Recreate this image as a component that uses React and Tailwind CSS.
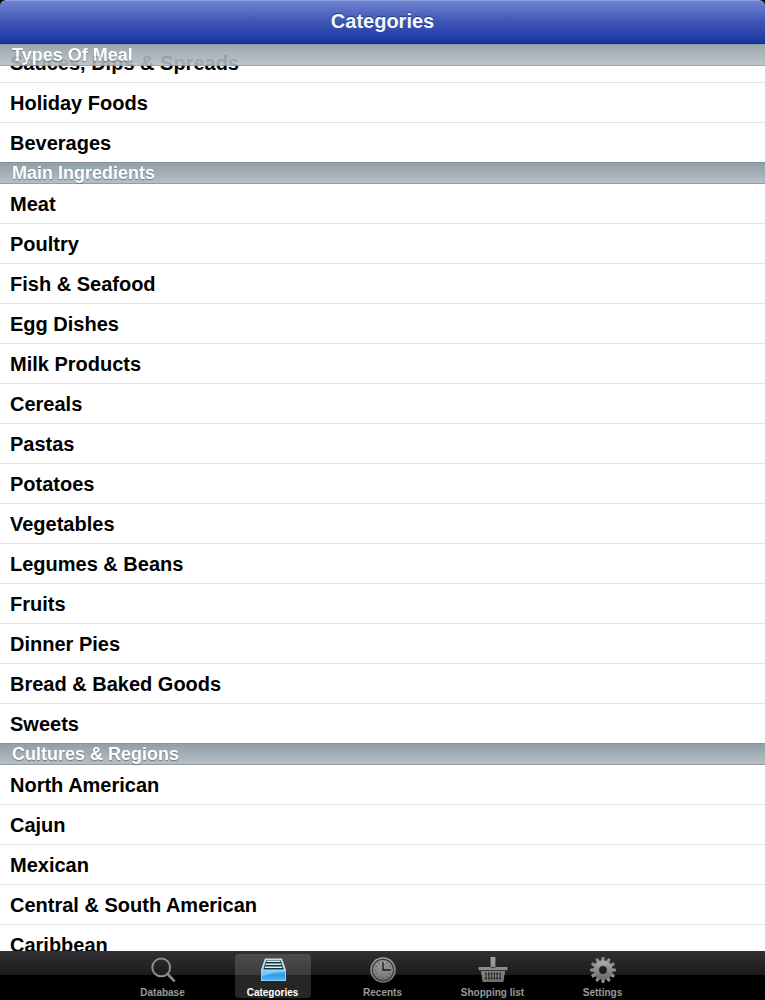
import { useState } from "react";

const sections = [
  {
    title: "Types Of Meal",
    items: ["Sauces, Dips & Spreads", "Holiday Foods", "Beverages"],
  },
  {
    title: "Main Ingredients",
    items: [
      "Meat",
      "Poultry",
      "Fish & Seafood",
      "Egg Dishes",
      "Milk Products",
      "Cereals",
      "Pastas",
      "Potatoes",
      "Vegetables",
      "Legumes & Beans",
      "Fruits",
      "Dinner Pies",
      "Bread & Baked Goods",
      "Sweets",
    ],
  },
  {
    title: "Cultures & Regions",
    items: [
      "North American",
      "Cajun",
      "Mexican",
      "Central & South American",
      "Caribbean",
    ],
  },
];

function IconGradient({ id }) {
  return (
    <defs>
      <linearGradient id={id} x1="0" y1="0" x2="0" y2="1">
        <stop offset="0" stopColor="#a3a3a3" />
        <stop offset="1" stopColor="#707070" />
      </linearGradient>
    </defs>
  );
}

function SearchIcon() {
  return (
    <svg width="28" height="28" viewBox="0 0 28 28" fill="none">
      <circle cx="12.2" cy="11.4" r="8.9" stroke="#8d8d8d" strokeWidth="2" />
      <path d="M18.8 18.2 L25 24.6" stroke="#858585" strokeWidth="2.8" strokeLinecap="round" />
    </svg>
  );
}

function DrawerIcon() {
  return (
    <svg width="28" height="28" viewBox="0 0 28 28">
      <defs>
        <linearGradient id="drawer" x1="0" y1="0" x2="0" y2="1">
          <stop offset="0" stopColor="#4fb6f3" />
          <stop offset="0.5" stopColor="#2d9fe8" />
          <stop offset="1" stopColor="#4dbaf8" />
        </linearGradient>
      </defs>
      <path d="M5.8 2.5 H23 L27 14 V25 H2 V14 Z" fill="#b9e3f7" />
      <path d="M7.2 4 H21.6 L24.8 13.6 H4.2 Z" fill="#17323f" />
      <path
        d="M7.5 5.2 H21.3 M6.6 8.2 H22.2 M5.8 11.2 H23.2"
        stroke="#d7f0fa"
        strokeWidth="1.5"
      />
      <path d="M2.6 14.6 H26.4 V24.4 H2.6 Z" fill="url(#drawer)" />
      <path d="M2.6 14.6 H26.4 V16 C16 16 9 18 2.6 20.6 Z" fill="#a5dcf8" opacity="0.6" />
    </svg>
  );
}

function ClockIcon() {
  const ticks = [0, 30, 60, 90, 120, 150, 180, 210, 240, 270, 300, 330];
  return (
    <svg width="28" height="28" viewBox="0 0 28 28">
      <IconGradient id="clock" />
      <circle cx="14" cy="14" r="12.8" fill="url(#clock)" />
      <circle cx="14" cy="14" r="10.6" fill="none" stroke="#3a3a3a" strokeWidth="1.1" />
      {ticks.map((a) => (
        <path
          key={a}
          d="M14 5.4 V7.2"
          stroke="#505050"
          strokeWidth="1"
          transform={`rotate(${a} 14 14)`}
        />
      ))}
      <path d="M14 6.5 V14 H21.5" fill="none" stroke="#1c1c1c" strokeWidth="1.4" />
    </svg>
  );
}

function BasketIcon() {
  const cols = [8, 10.8, 13.6, 16.4, 19.2, 22];
  return (
    <svg width="30" height="28" viewBox="0 0 30 28">
      <IconGradient id="basket" />
      <path
        d="M12.6 1 H17.4 V11 H29.4 V14.2 H27.2 L25.4 26 H4.6 L2.8 14.2 H0.6 V11 H12.6 Z"
        fill="url(#basket)"
      />
      <path d="M2.8 14.6 H27.2" stroke="#242424" strokeWidth="0.9" />
      <path d="M12.6 11.6 H17.4" stroke="#3a3a3a" strokeWidth="1" />
      {cols.map((x) => (
        <path
          key={x}
          d={`M${x} 16.6 V19.4 M${x} 20.6 V23.4`}
          stroke="#1f1f1f"
          strokeWidth="1.5"
        />
      ))}
    </svg>
  );
}

function GearIcon() {
  const teeth = [0, 30, 60, 90, 120, 150, 180, 210, 240, 270, 300, 330];
  return (
    <svg width="28" height="28" viewBox="0 0 28 28">
      <IconGradient id="gear" />
      {teeth.map((a) => (
        <path
          key={a}
          d="M11.9 6 L12.7 1 H15.3 L16.1 6 Z"
          fill="#8e8e8e"
          transform={`rotate(${a} 14 14)`}
        />
      ))}
      <circle cx="14" cy="14" r="6.8" fill="none" stroke="url(#gear)" strokeWidth="5.8" />
    </svg>
  );
}

const tabs = [
  { label: "Database", Icon: SearchIcon },
  { label: "Categories", Icon: DrawerIcon },
  { label: "Recents", Icon: ClockIcon },
  { label: "Shopping list", Icon: BasketIcon },
  { label: "Settings", Icon: GearIcon },
];

function Section({ title, items, scrolled }) {
  return (
    <section>
      <h2
        className={`sticky top-0 z-10 h-[22px] border-y border-t-[#84929b] border-b-[#959da3] bg-linear-to-b from-[#909fa8] to-[#b7bec4] px-3 text-lg leading-5 font-bold text-white [text-shadow:0_1px_1px_#6b7780] ${
          scrolled ? "opacity-90" : ""
        }`}
      >
        {title}
      </h2>
      {/* first section is partly scrolled under its sticky header */}
      <ul className={scrolled ? "-mt-[23px]" : ""}>
        {items.map((item) => (
          <li key={item} className="border-b border-[#e2e2e2] last:border-b-0">
            <a
              href="#"
              className="block h-[39px] px-[10px] text-xl leading-[41px] font-bold text-black"
            >
              {item}
            </a>
          </li>
        ))}
      </ul>
    </section>
  );
}

export default function App() {
  const [active, setActive] = useState("Categories");

  return (
    <div className="flex h-screen flex-col bg-black font-['Liberation_Sans',Arial,sans-serif]">
      <header className="flex h-11 shrink-0 items-center justify-center rounded-t-md border-t border-b border-t-[#8fa6e0] border-b-[#1b2b78] bg-linear-to-b from-[#6f82d0] via-[#3f55b6] to-[#19359f] pb-0.5">
        <h1 className="text-xl font-bold text-[#f0f8ff] [text-shadow:0_-1px_1px_#22357f]">
          Categories
        </h1>
      </header>

      <main className="min-h-0 flex-1 overflow-hidden bg-white">
        {sections.map((s, i) => (
          <Section key={s.title} title={s.title} items={s.items} scrolled={i === 0} />
        ))}
      </main>

      <nav className="flex h-[49px] shrink-0 items-center justify-center gap-[34px] bg-linear-to-b from-[#323033] from-0% via-[#1b191c] via-50% to-black to-50%">
        {tabs.map(({ label, Icon }) => (
          <button
            key={label}
            type="button"
            onClick={() => setActive(label)}
            className={`flex h-11 w-[76px] flex-col items-center justify-between rounded-sm pt-0.5 text-[10px] leading-[10px] font-bold whitespace-nowrap ${
              active === label ? "bg-white/15 text-white" : "text-[#999999]"
            }`}
          >
            <Icon />
            {label}
          </button>
        ))}
      </nav>
    </div>
  );
}
